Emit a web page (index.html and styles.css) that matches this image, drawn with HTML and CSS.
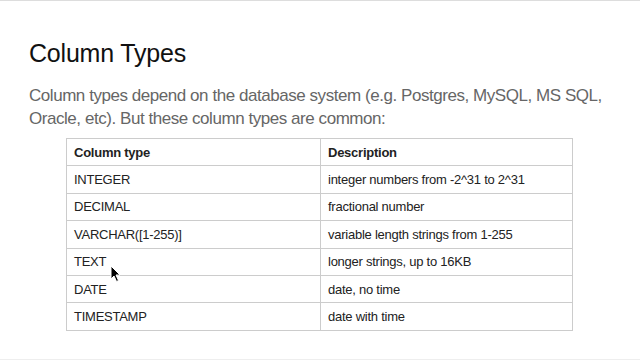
FILE: index.html
```html
<!DOCTYPE html>
<html lang="en">
<head>
  <meta charset="UTF-8">
  <title>Column Types</title>
  <link rel="stylesheet" href="styles.css">
</head>
<body>
  <div class="slide">
    <h1>Column Types</h1>
    <p class="lead">Column types depend on the database system (e.g. Postgres, MySQL, MS SQL, Oracle, etc). But these column types are common:</p>
    <table class="types">
      <tr><th>Column type</th><th>Description</th></tr>
      <tr><td>INTEGER</td><td>integer numbers from -2^31 to 2^31</td></tr>
      <tr><td>DECIMAL</td><td>fractional number</td></tr>
      <tr><td>VARCHAR([1-255)]</td><td>variable length strings from 1-255</td></tr>
      <tr><td>TEXT</td><td>longer strings, up to 16KB</td></tr>
      <tr><td>DATE</td><td>date, no time</td></tr>
      <tr><td>TIMESTAMP</td><td>date with time</td></tr>
    </table>
    <!-- mouse pointer over the table -->
    <svg class="cursor" width="12" height="18" viewBox="0 0 12 18">
      <path d="M1 1 L1 14 L4 11 L6.5 16.5 L8.5 15.5 L6 10 L10 10 Z" fill="#000" stroke="#fff" stroke-width="1"/>
    </svg>
  </div>
</body>
</html>
```
FILE: styles.css
```css
* {
  margin: 0;
  padding: 0;
  box-sizing: border-box;
}
body {
  font-family: 'Liberation Sans', Arial, sans-serif;
  background: #fff;
  color: #222;
}
.slide {
  position: relative;
  width: 640px;
  height: 360px;
  border-top: 1px solid #ddd;
  border-bottom: 1px solid #eee;
  padding: 37px 29px 0;
}
h1 {
  font-size: 25px;
  font-weight: 400;
  letter-spacing: -0.2px;
  color: #111;
  line-height: 30px;
}
.lead {
  margin-top: 16px;
  font-size: 17px;
  letter-spacing: -0.45px;
  line-height: 23px;
  color: #666;
}
.types {
  margin: 8px 0 0 37px;
  width: 507px;
  border-collapse: collapse;
  font-size: 13px;
  letter-spacing: -0.25px;
  color: #222;
}
.types th, .types td {
  border: 1px solid #ccc;
  height: 27.4px;
  padding: 0 7px;
  text-align: left;
  vertical-align: middle;
}
.types th {
  font-weight: 700;
}
.types th:first-child, .types td:first-child {
  width: 254px;
}
.cursor {
  position: absolute;
  left: 110px;
  top: 264px;
}
```
